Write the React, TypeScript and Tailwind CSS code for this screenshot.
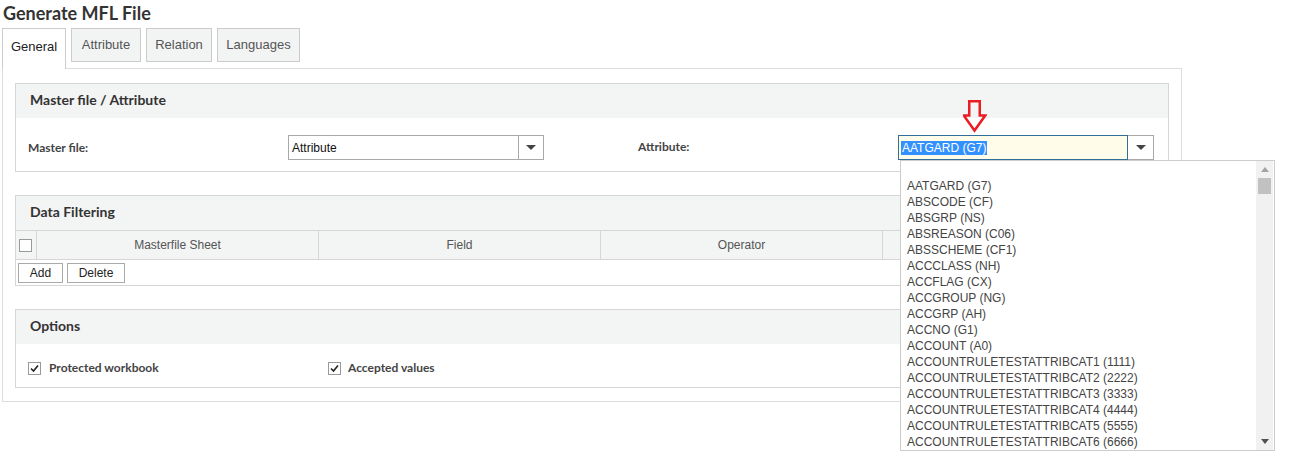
import React from "react";

const attrs = [
  "AATGARD (G7)",
  "ABSCODE (CF)",
  "ABSGRP (NS)",
  "ABSREASON (C06)",
  "ABSSCHEME (CF1)",
  "ACCCLASS (NH)",
  "ACCFLAG (CX)",
  "ACCGROUP (NG)",
  "ACCGRP (AH)",
  "ACCNO (G1)",
  "ACCOUNT (A0)",
  "ACCOUNTRULETESTATTRIBCAT1 (1111)",
  "ACCOUNTRULETESTATTRIBCAT2 (2222)",
  "ACCOUNTRULETESTATTRIBCAT3 (3333)",
  "ACCOUNTRULETESTATTRIBCAT4 (4444)",
  "ACCOUNTRULETESTATTRIBCAT5 (5555)",
  "ACCOUNTRULETESTATTRIBCAT6 (6666)",
];

function Caret() {
  return (
    <svg width="10" height="6" viewBox="0 0 10 6">
      <path d="M0 0 H10 L5 5 Z" fill="#444" />
    </svg>
  );
}

function Check({ checked }: { checked?: boolean }) {
  return (
    <span className="w-[13px] h-[13px] border border-[#999] bg-white flex items-center justify-center shrink-0">
      {checked && (
        <svg width="9" height="9" viewBox="0 0 9 9">
          <path d="M1 4.5 L3.5 7 L8 1.5" stroke="#222" strokeWidth="1.6" fill="none" />
        </svg>
      )}
    </span>
  );
}

function SectionHead({ title }: { title: string }) {
  return (
    <div className="h-[34px] bg-[#f3f4f4] flex items-center pl-[14px] pb-[3px] font-['Lato',sans-serif] font-bold text-[14px] text-[#333]">
      {title}
    </div>
  );
}

export default function App() {
  return (
    <div className="w-[1289px] h-[464px] bg-white font-['Liberation_Sans',Arial,sans-serif] text-[#333] relative">
      <h1 className="pl-[3px] pt-[2px] h-[27px] font-['Lato',sans-serif] font-bold text-[18px] leading-[22px] text-[#333]">
        Generate MFL File
      </h1>

      {/* tabs */}
      <div className="flex items-end pl-[2px] h-[41px] gap-[5px]">
        <div className="h-[41px] w-[64px] border border-[#ccc] border-b-0 bg-white flex items-start justify-center pt-[8px] text-[13px] text-[#222] relative top-[1px]">
          General
        </div>
        {["Attribute", "Relation", "Languages"].map((t, i) => (
          <div
            key={t}
            className={`h-[34px] mb-[6px] border border-[#ccc] bg-[#f2f4f4] flex items-center justify-center text-[13px] text-[#555] ${
              i === 0 ? "w-[70px]" : i === 1 ? "w-[66px]" : "w-[83px]"
            }`}
          >
            {t}
          </div>
        ))}
      </div>

      {/* panel */}
      <div className="ml-[2px] w-[1180px] border border-[#ddd] px-[12px] pt-[14px] pb-[13px] flex flex-col gap-[23px]">
        {/* Master file / Attribute */}
        <div className="border border-[#d6d6d6]">
          <SectionHead title="Master file / Attribute" />
          <div className="h-[53px] flex items-start pt-[17px] text-[12px] font-['Lato',sans-serif] font-bold text-[#444]">
            <div className="w-[272px] pl-[12px] pt-[4px]">Master file:</div>
            <div className="w-[256px] h-[25px] border border-[#a9a9a9] flex bg-white">
              <div className="flex-1 flex items-center pl-[3px] font-['Liberation_Sans',Arial,sans-serif] font-normal text-[12px] text-[#111]">
                Attribute
              </div>
              <div className="w-[25px] border-l border-[#a9a9a9] flex items-center justify-center">
                <Caret />
              </div>
            </div>
            <div className="w-[94px]" />
            <div className="w-[260px] pt-[3px]">Attribute:</div>
            <div className="relative w-[256px] h-[25px] border border-[#a9a9a9] flex bg-white">
              <div className="flex-1 flex items-center pl-[2px] bg-[#fffde9] border border-[#2f6f9a] -m-px mr-0 font-['Liberation_Sans',Arial,sans-serif] font-normal text-[12px]">
                <span className="bg-[#3390ff] text-white leading-[14px] px-px">AATGARD (G7)</span>
              </div>
              <div className="w-[25px] flex items-center justify-center">
                <Caret />
              </div>

              {/* red arrow */}
              <svg className="absolute left-[64px] top-[-36px]" width="24" height="33" viewBox="0 0 24 33">
                <path
                  d="M6.25 1.25 H16.75 V15.5 H22.25 L11.5 30.5 L0.75 15.5 H6.25 Z"
                  fill="none"
                  stroke="#ec1c24"
                  strokeWidth="2.5"
                  strokeLinejoin="miter"
                />
              </svg>

              {/* dropdown list */}
              <div className="absolute left-[1px] top-[24px] z-10 w-[375px] h-[291px] border border-[#ccc] bg-white flex">
                <ul className="flex-1 pt-[17px] pl-[6px] text-[12px] leading-[16px] text-[#444] font-['Liberation_Sans',Arial,sans-serif] font-normal overflow-hidden">
                  {attrs.map((a) => (
                    <li key={a} className="whitespace-nowrap">
                      {a}
                    </li>
                  ))}
                </ul>
                <div className="w-[17px] mr-px bg-[#f1f1f1] flex flex-col items-center">
                  <svg className="mt-[6px]" width="8" height="5" viewBox="0 0 8 5">
                    <path d="M0 5 L4 0 L8 5 Z" fill="#a3a3a3" />
                  </svg>
                  <div className="mt-[6px] w-[13px] h-[16px] bg-[#c1c1c1]" />
                  <div className="flex-1" />
                  <svg className="mb-[6px]" width="8" height="5" viewBox="0 0 8 5">
                    <path d="M0 0 H8 L4 5 Z" fill="#505050" />
                  </svg>
                </div>
              </div>
            </div>
          </div>
        </div>

        {/* Data Filtering */}
        <div className="border border-[#d6d6d6]">
          <SectionHead title="Data Filtering" />
          <div className="flex h-[29px] border-t border-[#d6d6d6] bg-[#f3f4f4] text-[12px] text-[#555]">
            <div className="w-[21px] flex items-center pl-[3px] border-r border-[#d6d6d6]">
              <Check />
            </div>
            {["Masterfile Sheet", "Field", "Operator", ""].map((h) => (
              <div key={h} className="w-[282px] flex items-center justify-center border-r border-[#d6d6d6] last:border-r-0 last:flex-1">
                {h}
              </div>
            ))}
          </div>
          <div className="flex gap-[4px] border-t border-[#d6d6d6] px-[2px] pt-[3px] pb-[2px] text-[12px] text-[#222]">
            <button className="h-[20px] w-[45px] border border-[#aaa] bg-white">Add</button>
            <button className="h-[20px] w-[58px] border border-[#aaa] bg-white">Delete</button>
          </div>
        </div>

        {/* Options */}
        <div className="border border-[#d6d6d6]">
          <SectionHead title="Options" />
          <div className="h-[43px] flex items-center pt-[5px] text-[12px] font-['Lato',sans-serif] font-bold text-[#444]">
            <div className="w-[312px] pl-[12px] flex items-center gap-[8px]">
              <Check checked />
              <span>Protected workbook</span>
            </div>
            <div className="flex items-center gap-[7px]">
              <Check checked />
              <span>Accepted values</span>
            </div>
          </div>
        </div>
      </div>
    </div>
  );
}
